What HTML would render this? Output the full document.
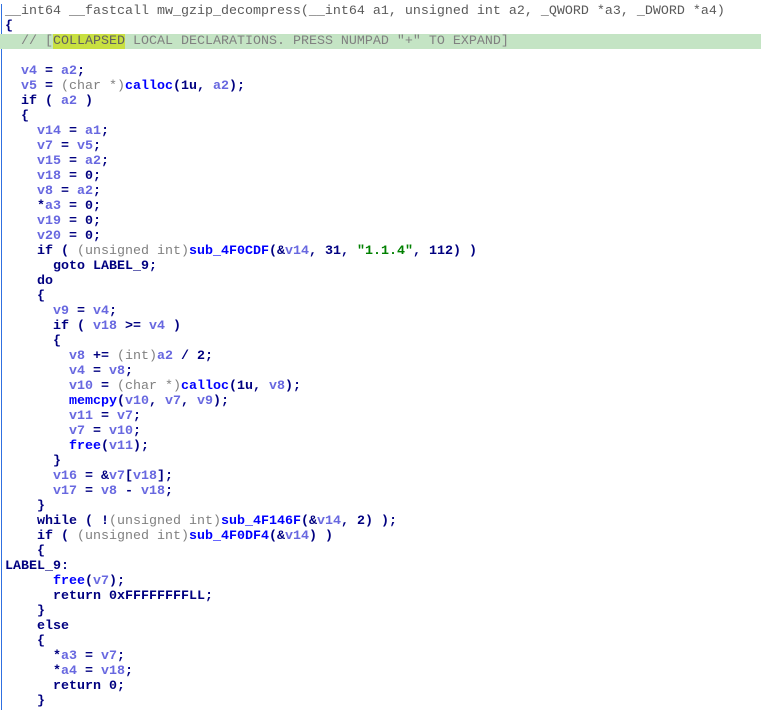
<!DOCTYPE html>
<html><head><meta charset="utf-8"><style>
body{margin:0;background:#fff;width:761px;height:710px;overflow:hidden;position:relative}
.bar{position:absolute;left:1px;top:4px;bottom:0;width:1px;background:#3070e0}
pre{margin:0;position:absolute;left:5px;top:4px;font:bold 13.33px/15px "Liberation Mono",monospace;color:#000080;white-space:pre}
.h{color:#5a5a5a;font-weight:normal}
.v{color:#6868e0}.t{color:#808080;font-weight:normal}.f{color:#0000ff}.s{color:#008000}
.c{background:#c4e4c4;color:#808080;font-weight:normal;display:inline-block;width:756px;margin-left:-5px;padding-left:5px}
.y{background:#c8e040;color:#606060}
</style></head><body><div class="bar"></div><pre><span class="h">__int64 __fastcall mw_gzip_decompress(__int64 a1, unsigned int a2, _QWORD *a3, _DWORD *a4)</span>
{
<span class="c">  // [<span class="y">COLLAPSED</span> LOCAL DECLARATIONS. PRESS NUMPAD "+" TO EXPAND]</span>

  <span class="v">v4</span> = <span class="v">a2</span>;
  <span class="v">v5</span> = <span class="t">(char *)</span><span class="f">calloc</span>(1u, <span class="v">a2</span>);
  if ( <span class="v">a2</span> )
  {
    <span class="v">v14</span> = <span class="v">a1</span>;
    <span class="v">v7</span> = <span class="v">v5</span>;
    <span class="v">v15</span> = <span class="v">a2</span>;
    <span class="v">v18</span> = 0;
    <span class="v">v8</span> = <span class="v">a2</span>;
    *<span class="v">a3</span> = 0;
    <span class="v">v19</span> = 0;
    <span class="v">v20</span> = 0;
    if ( <span class="t">(unsigned int)</span><span class="f">sub_4F0CDF</span>(&amp;<span class="v">v14</span>, 31, <span class="s">"1.1.4"</span>, 112) )
      goto LABEL_9;
    do
    {
      <span class="v">v9</span> = <span class="v">v4</span>;
      if ( <span class="v">v18</span> &gt;= <span class="v">v4</span> )
      {
        <span class="v">v8</span> += <span class="t">(int)</span><span class="v">a2</span> / 2;
        <span class="v">v4</span> = <span class="v">v8</span>;
        <span class="v">v10</span> = <span class="t">(char *)</span><span class="f">calloc</span>(1u, <span class="v">v8</span>);
        <span class="f">memcpy</span>(<span class="v">v10</span>, <span class="v">v7</span>, <span class="v">v9</span>);
        <span class="v">v11</span> = <span class="v">v7</span>;
        <span class="v">v7</span> = <span class="v">v10</span>;
        <span class="f">free</span>(<span class="v">v11</span>);
      }
      <span class="v">v16</span> = &amp;<span class="v">v7</span>[<span class="v">v18</span>];
      <span class="v">v17</span> = <span class="v">v8</span> - <span class="v">v18</span>;
    }
    while ( !<span class="t">(unsigned int)</span><span class="f">sub_4F146F</span>(&amp;<span class="v">v14</span>, 2) );
    if ( <span class="t">(unsigned int)</span><span class="f">sub_4F0DF4</span>(&amp;<span class="v">v14</span>) )
    {
LABEL_9:
      <span class="f">free</span>(<span class="v">v7</span>);
      return 0xFFFFFFFFLL;
    }
    else
    {
      *<span class="v">a3</span> = <span class="v">v7</span>;
      *<span class="v">a4</span> = <span class="v">v18</span>;
      return 0;
    }
</pre></body></html>
